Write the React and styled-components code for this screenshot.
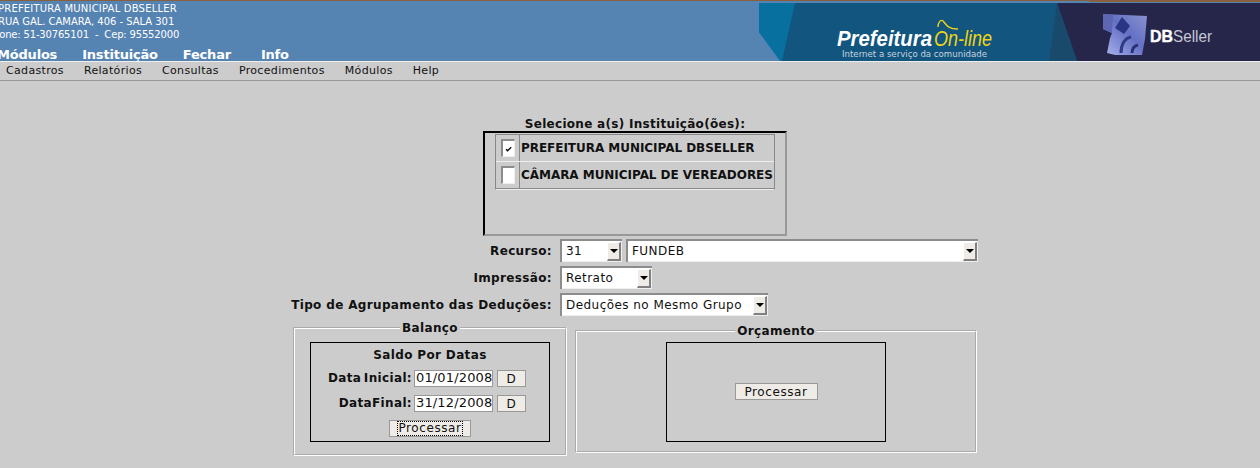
import React from 'react';
import styled, { createGlobalStyle } from 'styled-components';

const GlobalStyle = createGlobalStyle`
  html, body {
    margin: 0;
    padding: 0;
    height: 468px;
    overflow: hidden;
    background: #cccccc;
    font-family: "DejaVu Sans", Verdana, sans-serif;
  }
`;

const Page = styled.div`
  width: 1280px;
  margin-left: -5px;
`;

const Header = styled.header`
  display: flex;
  justify-content: space-between;
  box-sizing: border-box;
  height: 62px;
  background: #5583b2;
  border-top: 1px solid #8a5f3e;
  border-bottom: 1px solid #eeeeee;
`;

const HeaderInfo = styled.div`
  display: flex;
  flex-direction: column;
  padding-top: 1px;
`;

const InfoLine = styled.div`
  font-size: 10px;
  line-height: 13px;
  letter-spacing: ${(p) => p.$spacing}px;
  color: #ffffff;
  white-space: pre;
  margin-left: ${(p) => p.$indent}px;
`;

const TopNav = styled.nav`
  display: flex;
  gap: 25px;
  margin: 7px 0 0 2px;
`;

const TopLink = styled.span`
  margin-left: ${(p) => p.$offset || 0}px;
  font-size: 13px;
  line-height: 14px;
  font-weight: bold;
  letter-spacing: -0.2px;
  color: #ffffff;
`;

const Banner = styled.svg`
  display: block;
  flex: none;
  margin-top: -1px;
`;

const MenuBar = styled.nav`
  display: flex;
  gap: 20px;
  height: 18px;
  padding-left: 11px;
  border-bottom: 1px solid #999999;
  background: #cccccc;
`;

const MenuItem = styled.span`
  font-size: 11px;
  line-height: 17px;
  letter-spacing: 0.33px;
  color: #111111;
`;

const Form = styled.main`
  width: 684px;
  margin: 0 auto;
  padding-top: 36px;
`;

const InstitutionTitle = styled.div`
  text-align: center;
  font-size: 12px;
  line-height: 14px;
  font-weight: bold;
  letter-spacing: 0.3px;
  color: #111111;
`;

const InstitutionBox = styled.div`
  box-sizing: border-box;
  width: 304px;
  height: 105px;
  margin: 0 auto 3px;
  padding: 1px 10px;
  border-style: solid;
  border-width: 2px;
  border-color: #000000 #999999 #999999 #000000;
`;

const InstitutionTable = styled.div`
  width: 280px;
  border-top: 1px solid #888888;
  border-left: 1px solid #888888;
  border-right: 1px solid #888888;
  border-bottom: 1px solid #eeeeee;
  box-sizing: border-box;
`;

const InstitutionRow = styled.div`
  display: flex;
  height: 27px;
  box-sizing: border-box;
  border-bottom: ${(p) => (p.$last ? '1px solid #888888' : '1px solid #eeeeee')};
`;

const CheckCell = styled.div`
  width: 23px;
  flex: none;
  display: flex;
  align-items: center;
  justify-content: center;
  border-right: 1px solid #888888;
`;

const CheckBox = styled.div`
  box-sizing: border-box;
  width: 14px;
  height: 18px;
  display: flex;
  align-items: center;
  justify-content: center;
  background: #ffffff;
  border-style: solid;
  border-width: 2px 1px 1px 2px;
  border-color: #8c8c8c #eeeeee #eeeeee #8c8c8c;
`;

const InstitutionName = styled.div`
  padding-left: 1px;
  font-size: 12px;
  line-height: 27px;
  font-weight: bold;
  letter-spacing: -0.04px;
  white-space: nowrap;
  color: #111111;
`;

const FieldRow = styled.div`
  display: flex;
  align-items: center;
  height: 23px;
  margin-bottom: 4px;
`;

const FieldLabel = styled.label`
  flex: none;
  width: 259px;
  margin-right: 8px;
  display: flex;
  justify-content: flex-end;
  white-space: nowrap;
  font-size: 12px;
  font-weight: bold;
  letter-spacing: 0.35px;
  color: #111111;
`;

const Select = styled.div`
  box-sizing: border-box;
  flex: none;
  width: ${(p) => p.$width}px;
  height: 23px;
  margin-right: 4px;
  display: flex;
  align-items: center;
  justify-content: space-between;
  padding: 0 1px 0 4px;
  background: #ffffff;
  border-style: solid;
  border-width: 2px 0 0 2px;
  border-color: #8c8c8c;
  box-shadow: inset -1px -1px 0 #eeeeee;
  font-size: 12px;
  letter-spacing: 0.45px;
  color: #111111;
`;

const SelectText = styled.span`
  margin-top: -2px;
`;

const ArrowButton = styled.span`
  box-sizing: border-box;
  width: 14px;
  height: 19px;
  display: flex;
  align-items: center;
  justify-content: center;
  background: #efebe7;
  border-style: solid;
  border-width: 1px 2px 2px 1px;
  border-color: #ffffff #808080 #808080 #ffffff;
`;

const Arrow = styled.i`
  width: 0;
  height: 0;
  border-left: 4px solid transparent;
  border-right: 4px solid transparent;
  border-top: 4px solid #000000;
`;

const Panels = styled.div`
  display: flex;
  align-items: flex-start;
  gap: 8px;
  margin-top: 5px;
`;

const Panel = styled.fieldset`
  box-sizing: border-box;
  flex: none;
  width: ${(p) => p.$width}px;
  height: ${(p) => p.$height}px;
  margin: ${(p) => p.$top}px 0 0;
  padding: 0;
  display: flex;
  justify-content: center;
  border: 2px groove #ffffff;
`;

const PanelLegend = styled.legend`
  margin: 0 auto;
  padding: 0 2px;
  font-size: 12px;
  line-height: 14px;
  font-weight: bold;
  letter-spacing: 0.35px;
  color: #111111;
`;

const InnerBox = styled.div`
  box-sizing: border-box;
  width: ${(p) => p.$width}px;
  height: 100px;
  margin: ${(p) => p.$top}px auto 0;
  padding-bottom: ${(p) => (p.$centered ? 1 : 0)}px;
  border: 1px solid #000000;
  display: flex;
  flex-direction: column;
  align-items: center;
  justify-content: ${(p) => (p.$centered ? 'center' : 'flex-start')};
`;

const BoxTitle = styled.div`
  margin: 3px 0 6px;
  font-size: 12px;
  line-height: 18px;
  font-weight: bold;
  letter-spacing: 0.35px;
  color: #111111;
`;

const DateRow = styled.div`
  align-self: stretch;
  display: flex;
  align-items: center;
  height: 17px;
  margin-bottom: 8px;
`;

const DateLabel = styled.label`
  width: 101px;
  margin: -2px 2px 0 0;
  text-align: right;
  white-space: nowrap;
  font-size: 12px;
  font-weight: bold;
  letter-spacing: 0.35px;
  word-spacing: -2px;
  color: #111111;
`;

const DateInput = styled.input`
  box-sizing: border-box;
  width: 79px;
  height: 17px;
  margin: 0 4px 0 0;
  padding: 0 0 2px 1px;
  border: 1px solid #999999;
  border-radius: 0;
  outline: none;
  background: #ffffff;
  font: 13px "DejaVu Sans", sans-serif;
  letter-spacing: 0.15px;
  color: #111111;
`;

const FormButton = styled.button`
  box-sizing: border-box;
  width: ${(p) => p.$width}px;
  height: 17px;
  padding: 0;
  border: 1px solid #999999;
  border-radius: 0;
  background: #efebe7;
  font: 12px "DejaVu Sans", sans-serif;
  letter-spacing: 0.6px;
  color: #111111;
`;

const FocusLabel = styled.span`
  display: block;
  width: 66px;
  margin: 0 auto;
  line-height: 15px;
  outline: 1px dotted #000000;
  outline-offset: -1px;
`;

const BannerArt = () => (
  <Banner width="516" height="61" viewBox="759 0 516 61" role="img" aria-label="Prefeitura On-line, DBSeller">
    <defs>
      <linearGradient id="dbLogo" x1="0" y1="1" x2="1" y2="0">
        <stop offset="0" stopColor="#a9b6ee" />
        <stop offset="0.55" stopColor="#6470c4" />
        <stop offset="1" stopColor="#8a94d0" />
      </linearGradient>
      <filter id="soft" x="-10%" y="-10%" width="120%" height="120%">
        <feGaussianBlur stdDeviation="0.7" />
      </filter>
    </defs>
    <rect x="1089" y="0" width="186" height="2" fill="#8a5f3e" />
    <polygon points="759,3 1275,3 1275,61 782,61 759,32" fill="#12557f" />
    <polygon points="759,3 795,3 782,61 780,61 759,32" fill="#08709f" />
    <polygon points="1057,3 1275,3 1275,61 1077,61" fill="#26264a" />
    <polygon points="1057,3 1077,61 1049,61" fill="#194a6c" />
    <text x="837" y="46" fontFamily="Liberation Sans" fontSize="22" fontWeight="bold" fontStyle="italic" fill="#ffffff" textLength="95" lengthAdjust="spacingAndGlyphs">
      Prefeitura
    </text>
    <text x="934" y="46" fontFamily="Liberation Sans" fontSize="22" fontStyle="italic" fill="#efd318" textLength="58" lengthAdjust="spacingAndGlyphs">
      On-line
    </text>
    <path d="M938 27 C938 22 941 19 943 21 C946 24 947 29 958 29" fill="none" stroke="#efd318" strokeWidth="1.4" />
    <text x="842" y="57" fontFamily="DejaVu Sans" fontSize="9.5" fill="#c8d4de" textLength="145" lengthAdjust="spacingAndGlyphs">
      Internet a serviço da comunidade
    </text>
    <g filter="url(#soft)">
      <polygon points="1103,14 1147,16 1145,39 1142,55 1115,55 1107,53 1110,38 1112,33 1103,29" fill="url(#dbLogo)" />
      <polygon points="1103,14 1113,15 1112,33 1103,29" fill="#5c66b2" />
      <polygon points="1122,17 1130,26 1124,34 1115,28" fill="#2b3584" />
      <path d="M1121 53 C1121 44 1125 38 1131 37" fill="none" stroke="#323a86" strokeWidth="3" />
      <path d="M1132 53 C1132 49 1134 46 1138 45" fill="none" stroke="#2c3276" strokeWidth="3" />
    </g>
    <text x="1150" y="42" fontFamily="Liberation Sans" fontSize="17" fontWeight="bold" fill="#ffffff" stroke="#ffffff" strokeWidth="0.4" textLength="23" lengthAdjust="spacingAndGlyphs">
      DB
    </text>
    <text x="1173" y="42" fontFamily="Liberation Sans" fontSize="17" fill="#c5c8d6" textLength="39" lengthAdjust="spacingAndGlyphs">
      Seller
    </text>
  </Banner>
);

const SelectField = ({ width, children }) => (
  <Select $width={width}>
    <SelectText>{children}</SelectText>
    <ArrowButton>
      <Arrow />
    </ArrowButton>
  </Select>
);

const Institution = ({ name, checked, last }) => (
  <InstitutionRow $last={last}>
    <CheckCell>
      <CheckBox>
        {checked && (
          <svg width="9" height="8" viewBox="0 0 9 8">
            <path d="M2 4.2 L3.6 5.8 L7.2 2.2" fill="none" stroke="#000000" strokeWidth="1.3" />
          </svg>
        )}
      </CheckBox>
    </CheckCell>
    <InstitutionName>{name}</InstitutionName>
  </InstitutionRow>
);

const DateField = ({ label, value }) => (
  <DateRow>
    <DateLabel>{label}</DateLabel>
    <DateInput readOnly value={value} />
    <FormButton type="button" $width={29}>D</FormButton>
  </DateRow>
);

const App = () => (
  <Page>
    <GlobalStyle />
    <Header>
      <HeaderInfo>
        <InfoLine $indent={3} $spacing={0.2}>PREFEITURA MUNICIPAL DBSELLER</InfoLine>
        <InfoLine $indent={3} $spacing={-0.03}>RUA GAL. CAMARA, 406 - SALA 301</InfoLine>
        <InfoLine $indent={-1} $spacing={-0.17}>Fone: 51-30765101  -  Cep: 95552000</InfoLine>
        <TopNav>
          <TopLink>Módulos</TopLink>
          <TopLink>Instituição</TopLink>
          <TopLink>Fechar</TopLink>
          <TopLink $offset={5}>Info</TopLink>
        </TopNav>
      </HeaderInfo>
      <BannerArt />
    </Header>
    <MenuBar>
      <MenuItem>Cadastros</MenuItem>
      <MenuItem>Relatórios</MenuItem>
      <MenuItem>Consultas</MenuItem>
      <MenuItem>Procedimentos</MenuItem>
      <MenuItem>Módulos</MenuItem>
      <MenuItem>Help</MenuItem>
    </MenuBar>
    <Form>
      <InstitutionTitle>Selecione a(s) Instituição(ões):</InstitutionTitle>
      <InstitutionBox>
        <InstitutionTable>
          <Institution name="PREFEITURA MUNICIPAL DBSELLER" checked />
          <Institution name="CÂMARA MUNICIPAL DE VEREADORES" last />
        </InstitutionTable>
      </InstitutionBox>
      <FieldRow>
        <FieldLabel>Recurso:</FieldLabel>
        <SelectField width={62}>31</SelectField>
        <SelectField width={352}>FUNDEB</SelectField>
      </FieldRow>
      <FieldRow>
        <FieldLabel>Impressão:</FieldLabel>
        <SelectField width={92}>Retrato</SelectField>
      </FieldRow>
      <FieldRow>
        <FieldLabel>Tipo de Agrupamento das Deduções:</FieldLabel>
        <SelectField width={208}>Deduções no Mesmo Grupo</SelectField>
      </FieldRow>
      <Panels>
        <Panel $width={274} $height={135} $top={0}>
          <PanelLegend>Balanço</PanelLegend>
          <InnerBox $width={240} $top={7}>
            <BoxTitle>Saldo Por Datas</BoxTitle>
            <DateField label="Data Inicial:" value="01/01/2008" />
            <DateField label="DataFinal:" value="31/12/2008" />
            <FormButton type="button" $width={82}>
              <FocusLabel>Processar</FocusLabel>
            </FormButton>
          </InnerBox>
        </Panel>
        <Panel $width={402} $height={129} $top={3}>
          <PanelLegend>Orçamento</PanelLegend>
          <InnerBox $width={220} $top={4} $centered>
            <FormButton type="button" $width={83}>Processar</FormButton>
          </InnerBox>
        </Panel>
      </Panels>
    </Form>
  </Page>
);

export default App;
